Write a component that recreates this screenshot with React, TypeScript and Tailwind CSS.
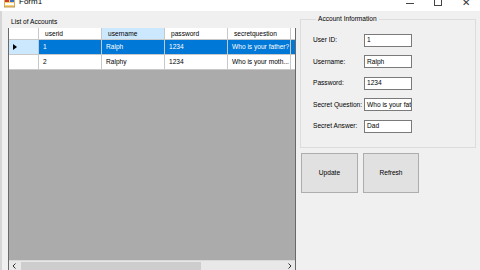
import React from "react";

const font = { fontFamily: '"Liberation Sans", Arial, sans-serif' };

function Cell({ w, children, cls = "" }: { w: string; children?: React.ReactNode; cls?: string }) {
  return (
    <div className={`${w} shrink-0 h-full flex items-center pl-[4px] border-r border-[#c8c8c8] overflow-hidden whitespace-nowrap ${cls}`}>
      {children}
    </div>
  );
}

function Field({ label, value }: { label: string; value: string }) {
  return (
    <div className="flex items-center h-[14px]">
      <div className="w-[51px] shrink-0">{label}</div>
      <div className="w-[48px] h-[13px] bg-white border border-[#7a7a7a] flex items-center pl-[2px] overflow-hidden whitespace-nowrap">
        {value}
      </div>
    </div>
  );
}

export default function App() {
  return (
    <div className="w-[480px] h-[270px] overflow-hidden flex flex-col bg-white text-[6.6px] text-black" style={font}>
      {/* Title bar */}
      <div className="h-[11px] shrink-0 flex items-start bg-white relative">
        <div className="ml-[4px] -mt-[2px] w-[11px] h-[10px]">
          <svg width="11" height="10" viewBox="0 0 11 10">
            <rect x="0" y="0" width="11" height="9" fill="#f6d27a" stroke="#b07a30" strokeWidth="0.8" />
            <rect x="1" y="2" width="4" height="2" fill="#d23b2c" />
            <rect x="6" y="2" width="4" height="2" fill="#3a6fc4" />
            <rect x="1" y="5" width="9" height="2" fill="#ffffff" />
          </svg>
        </div>
        <div className="ml-[4px] -mt-[3px] text-[8px] leading-[10px]">Form1</div>
        <div className="ml-auto flex items-start -mt-[3px] text-[#333]">
          <div className="w-[28px] flex justify-center">
            <div className="w-[8px] h-[1px] bg-[#444] mt-[6px]" />
          </div>
          <div className="w-[28px] flex justify-center">
            <div className="w-[8px] h-[8px] border border-[#444] mt-[1px]" />
          </div>
          <div className="w-[28px] flex justify-center text-[10px] leading-[10px] mt-[1px]">✕</div>
        </div>
      </div>

      {/* Body */}
      <div className="flex-1 flex bg-[#f0f0f0] border-l-[2px] border-[#d6d6d6]">
        {/* Left group */}
        <div className="flex flex-col ml-[6px] w-[288px] pt-[5px]">
          <div className="h-[12px] flex items-center pl-[3px]">List of Accounts</div>
          <div className="flex-1 flex flex-col border-l border-r border-[#696969] bg-[#ababab]">
            {/* header */}
            <div className="h-[12px] flex bg-white border-b border-[#c8c8c8]">
              <Cell w="w-[30px]" />
              <Cell w="w-[63px]" cls="pl-[6px]">userid</Cell>
              <Cell w="w-[63px]" cls="pl-[6px] bg-[#cce8ff]">username</Cell>
              <Cell w="w-[63px]" cls="pl-[6px]">password</Cell>
              <Cell w="w-[63px]" cls="pl-[6px]">secretquestion</Cell>
              <Cell w="w-[4px]" cls="border-r-0 pl-[1px]">s</Cell>
            </div>
            {/* row 1 */}
            <div className="h-[15px] flex border-b border-[#c8c8c8]">
              <Cell w="w-[30px]" cls="bg-[#cce8ff] pl-[3px]">
                <svg width="4" height="6" viewBox="0 0 4 6">
                  <path d="M0 0 L4 3 L0 6 Z" fill="#000" />
                </svg>
              </Cell>
              <Cell w="w-[63px]" cls="bg-[#0078d7] text-white border-[#5aa0e0]">1</Cell>
              <Cell w="w-[63px]" cls="bg-[#0078d7] text-white border-[#5aa0e0]">Ralph</Cell>
              <Cell w="w-[63px]" cls="bg-[#0078d7] text-white border-[#5aa0e0]">1234</Cell>
              <Cell w="w-[63px]" cls="bg-[#0078d7] text-white border-[#5aa0e0]">Who is your father?</Cell>
              <Cell w="w-[4px]" cls="bg-[#0078d7] text-white border-r-0 pl-[1px]">D</Cell>
            </div>
            {/* row 2 */}
            <div className="h-[15px] flex bg-white border-b border-[#c8c8c8]">
              <Cell w="w-[30px]" />
              <Cell w="w-[63px]">2</Cell>
              <Cell w="w-[63px]">Ralphy</Cell>
              <Cell w="w-[63px]">1234</Cell>
              <Cell w="w-[63px]">Who is your moth...</Cell>
              <Cell w="w-[4px]" cls="border-r-0 pl-[1px]">M</Cell>
            </div>
            <div className="flex-1" />
            {/* horizontal scrollbar */}
            <div className="h-[10px] flex items-center bg-[#e8e8e8] border-t border-[#d9d9d9]">
              <div className="w-[10px] flex justify-center text-[#333]">
                <svg width="4" height="6" viewBox="0 0 4 6">
                  <path d="M3.5 0.5 L1 3 L3.5 5.5" fill="none" stroke="#333" strokeWidth="1" />
                </svg>
              </div>
              <div className="w-[180px] h-[8px] bg-[#cdcdcd] ml-[2px]" />
              <div className="flex-1" />
              <div className="w-[10px] flex justify-center">
                <svg width="4" height="6" viewBox="0 0 4 6">
                  <path d="M0.5 0.5 L3 3 L0.5 5.5" fill="none" stroke="#333" strokeWidth="1" />
                </svg>
              </div>
            </div>
          </div>
        </div>

        {/* Right side */}
        <div className="flex flex-col ml-[4px] w-[176px] pt-[4px]">
          <fieldset className="h-[133px] border border-[#dcdcdc] px-[12px] pt-[7px]">
            <legend className="ml-[3px] px-[2px] text-[6.6px] leading-[8px]">Account Information</legend>
            <div className="flex flex-col gap-[7.5px] pt-[3px]">
              <Field label="User ID:" value="1" />
              <Field label="Username:" value="Ralph" />
              <Field label="Password:" value="1234" />
              <Field label="Secret Question:" value="Who is your father?" />
              <Field label="Secret Answer:" value="Dad" />
            </div>
          </fieldset>
          <div className="flex gap-[5px] mt-[5px] ml-[1px]">
            <div className="w-[57px] h-[40px] bg-[#e1e1e1] border border-[#adadad] flex items-center justify-center">Update</div>
            <div className="w-[56px] h-[40px] bg-[#e1e1e1] border border-[#adadad] flex items-center justify-center">Refresh</div>
          </div>
        </div>
      </div>
    </div>
  );
}
